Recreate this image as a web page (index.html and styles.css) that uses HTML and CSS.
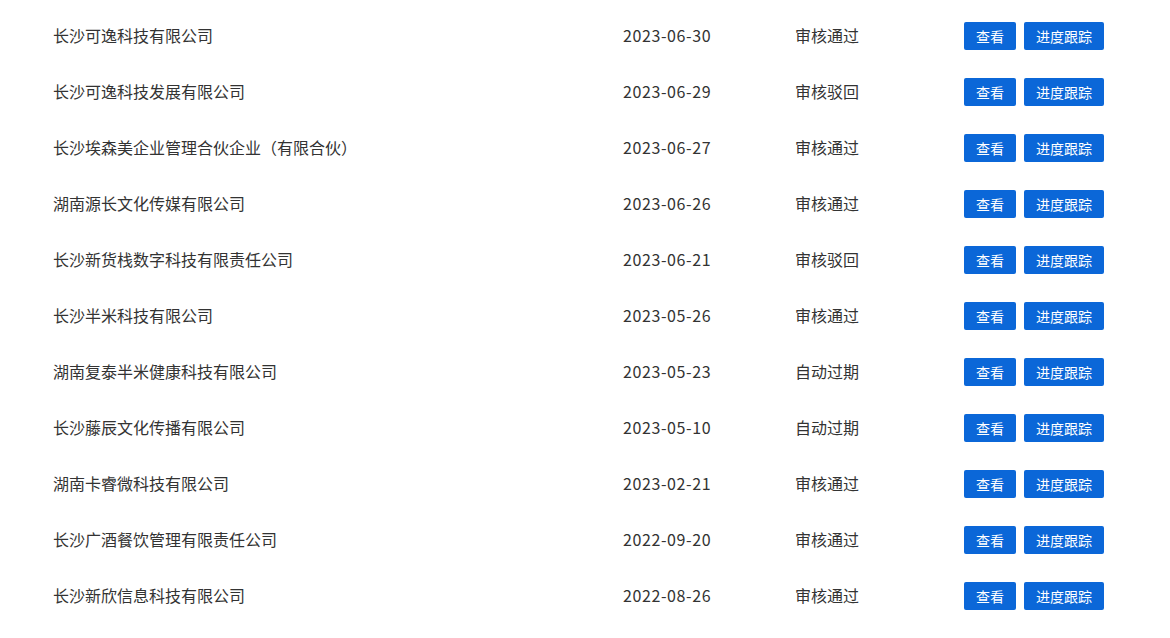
FILE: index.html
```html
<!DOCTYPE html>
<html lang="zh-CN">
<head>
<meta charset="utf-8">
<link rel="stylesheet" href="styles.css">
</head>
<body>
<div class="list">
  <div class="row"><span class="cell name">长沙可逸科技有限公司</span><span class="cell date">2023-06-30</span><span class="cell status">审核通过</span><span class="ops"><button class="btn">查看</button><button class="btn">进度跟踪</button></span></div>
  <div class="row"><span class="cell name">长沙可逸科技发展有限公司</span><span class="cell date">2023-06-29</span><span class="cell status">审核驳回</span><span class="ops"><button class="btn">查看</button><button class="btn">进度跟踪</button></span></div>
  <div class="row"><span class="cell name">长沙埃森美企业管理合伙企业（有限合伙）</span><span class="cell date">2023-06-27</span><span class="cell status">审核通过</span><span class="ops"><button class="btn">查看</button><button class="btn">进度跟踪</button></span></div>
  <div class="row"><span class="cell name">湖南源长文化传媒有限公司</span><span class="cell date">2023-06-26</span><span class="cell status">审核通过</span><span class="ops"><button class="btn">查看</button><button class="btn">进度跟踪</button></span></div>
  <div class="row"><span class="cell name">长沙新货栈数字科技有限责任公司</span><span class="cell date">2023-06-21</span><span class="cell status">审核驳回</span><span class="ops"><button class="btn">查看</button><button class="btn">进度跟踪</button></span></div>
  <div class="row"><span class="cell name">长沙半米科技有限公司</span><span class="cell date">2023-05-26</span><span class="cell status">审核通过</span><span class="ops"><button class="btn">查看</button><button class="btn">进度跟踪</button></span></div>
  <div class="row"><span class="cell name">湖南复泰半米健康科技有限公司</span><span class="cell date">2023-05-23</span><span class="cell status">自动过期</span><span class="ops"><button class="btn">查看</button><button class="btn">进度跟踪</button></span></div>
  <div class="row"><span class="cell name">长沙藤辰文化传播有限公司</span><span class="cell date">2023-05-10</span><span class="cell status">自动过期</span><span class="ops"><button class="btn">查看</button><button class="btn">进度跟踪</button></span></div>
  <div class="row"><span class="cell name">湖南卡睿微科技有限公司</span><span class="cell date">2023-02-21</span><span class="cell status">审核通过</span><span class="ops"><button class="btn">查看</button><button class="btn">进度跟踪</button></span></div>
  <div class="row"><span class="cell name">长沙广酒餐饮管理有限责任公司</span><span class="cell date">2022-09-20</span><span class="cell status">审核通过</span><span class="ops"><button class="btn">查看</button><button class="btn">进度跟踪</button></span></div>
  <div class="row"><span class="cell name">长沙新欣信息科技有限公司</span><span class="cell date">2022-08-26</span><span class="cell status">审核通过</span><span class="ops"><button class="btn">查看</button><button class="btn">进度跟踪</button></span></div>
</div>
</body>
</html>
```
FILE: styles.css
```css
html, body {
  margin: 0;
  padding: 0;
  background: #fff;
}
body {
  font-family: "Noto Sans CJK SC", "Noto Sans", sans-serif;
  color: #333;
  font-size: 16px;
}
.list {
  padding-top: 8px;
  padding-left: 53px;
}
.row {
  display: grid;
  grid-template-columns: 570px 172px 169px auto;
  align-items: center;
  height: 56px;
}
.cell {
  padding-bottom: 3px;
}
.date {
  letter-spacing: 0.6px;
}
.ops {
  display: flex;
  gap: 8px;
}
.btn {
  font-family: "Noto Sans CJK SC", sans-serif;
  font-size: 14px;
  color: #fff;
  background: #0b67d8;
  border: none;
  border-radius: 2px;
  height: 28px;
  padding: 0 12px;
  line-height: 28px;
  cursor: pointer;
}
```
